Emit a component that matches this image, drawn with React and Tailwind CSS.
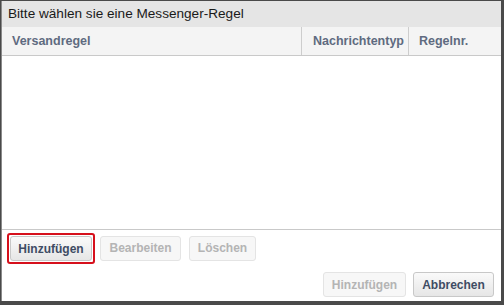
import React from 'react'

const Button = ({ children, disabled, className = '' }) => (
  <button
    className={`h-[25px] rounded-[3px] border text-[12px] font-bold ${
      disabled
        ? 'border-[#e4e4e4] bg-[#f7f7f7] text-[#b4b4b4]'
        : 'border-[#c8c8c8] bg-gradient-to-b from-[#fafafa] to-[#e6e6e6] text-[#3e4c64]'
    } ${className}`}
  >
    {children}
  </button>
)

const App = () => {
  return (
    <div
      className="w-[504px] h-[305px] bg-[#4a4a4a] pt-[1px] pl-[1px] pr-[3px] pb-[4px]"
      style={{ fontFamily: '"Liberation Sans", Arial, sans-serif' }}
    >
      <div className="h-full flex flex-col bg-white border-l border-[#8a8a8a]">
        <div className="h-[26px] bg-[#e5e5e5] flex items-center pl-[6px] text-[13.6px] text-[#1a1a1a]">
          Bitte wählen sie eine Messenger-Regel
        </div>
        <div className="h-[29px] bg-[#f4f4f4] border-b border-[#c9c9c9] flex text-[12.5px] font-bold text-[#5f6b80]">
          <div className="w-[300px] flex items-center pl-[10px] border-r border-[#cdcdcd]">Versandregel</div>
          <div className="w-[107px] flex items-center pl-[11px] border-r border-[#cdcdcd]">Nachrichtentyp</div>
          <div className="flex-1 flex items-center pl-[10px]">Regelnr.</div>
        </div>
        <div className="flex-1 border-b border-[#c9c9c9]" />
        <div className="flex items-center pl-[5px] pt-[3px] pb-[8px]">
          <div className="rounded-[3px] border-[2px] border-[#d6101c] p-[1px]">
            <Button className="w-[82px]">Hinzufügen</Button>
          </div>
          <Button disabled className="w-[81px] ml-[5px]">Bearbeiten</Button>
          <Button disabled className="w-[67px] ml-[8px]">Löschen</Button>
        </div>
        <div className="flex justify-end gap-[7px] pr-[7px] pb-[4px]">
          <Button disabled className="w-[83px]">Hinzufügen</Button>
          <Button className="w-[81px]">Abbrechen</Button>
        </div>
      </div>
    </div>
  )
}

export default App
